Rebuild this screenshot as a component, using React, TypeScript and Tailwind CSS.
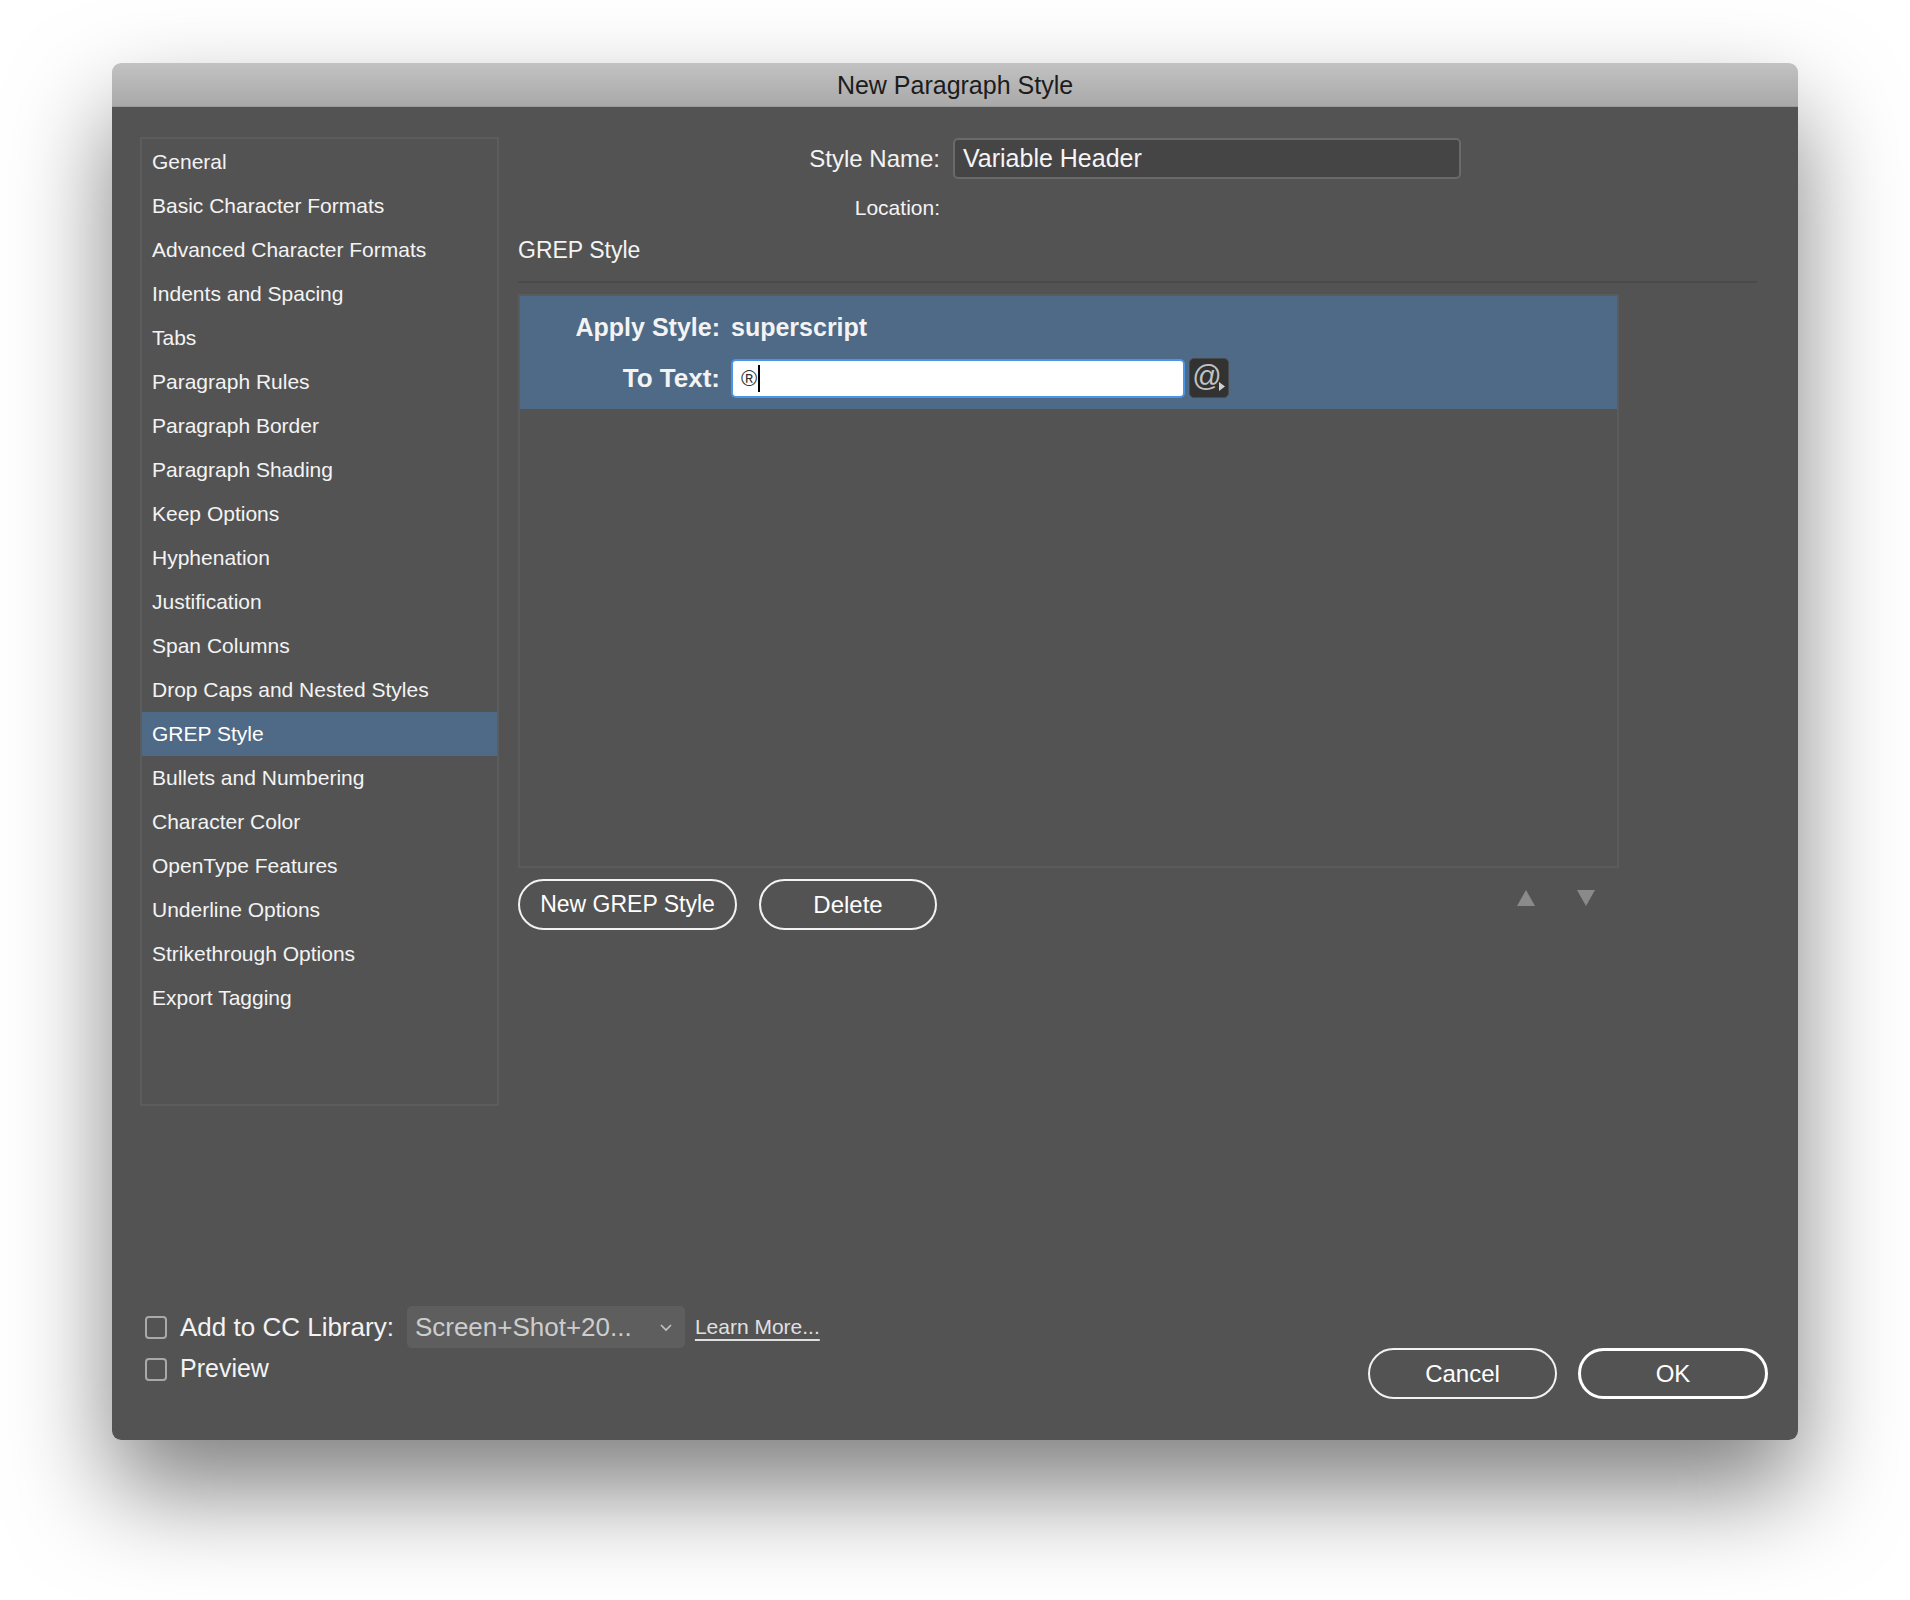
import React from "react";

// ---------------------------------------------------------------------------
// Data
// ---------------------------------------------------------------------------

const SECTIONS = [
  "General",
  "Basic Character Formats",
  "Advanced Character Formats",
  "Indents and Spacing",
  "Tabs",
  "Paragraph Rules",
  "Paragraph Border",
  "Paragraph Shading",
  "Keep Options",
  "Hyphenation",
  "Justification",
  "Span Columns",
  "Drop Caps and Nested Styles",
  "GREP Style",
  "Bullets and Numbering",
  "Character Color",
  "OpenType Features",
  "Underline Options",
  "Strikethrough Options",
  "Export Tagging",
];

const FONT = "font-['Liberation_Sans',Arial,sans-serif]";

// ---------------------------------------------------------------------------
// Component
// ---------------------------------------------------------------------------

export default function App() {
  return (
    <div className={`min-h-[1600px] w-[1910px] bg-white pt-[63px] ${FONT}`}>
      <div className="ml-[112px] flex w-[1686px] flex-col overflow-hidden rounded-[9px] shadow-[0_50px_100px_rgba(0,0,0,0.5)]">
        {/* Title bar */}
        <div className="flex h-[44px] items-center justify-center border-b border-[#9a9a9a] bg-gradient-to-b from-[#c2c2c2] to-[#a9a9a9] pt-[3px] text-[25px] text-[#1c1c1c]">
          New Paragraph Style
        </div>

        {/* Body */}
        <div className="flex h-[1333px] flex-col bg-[#535353] pl-[28px] pr-[30px] pt-[30px] text-[#f3f3f3]">
          <div className="flex">
            <Sidebar />
            <GrepPanel />
          </div>

          {/* Footer */}
          <div className="mt-[200px] flex items-start justify-between">
            <div className="flex flex-col pl-[5px]">
              <div className="flex h-[42px] items-center">
                <Checkbox />
                <span className="ml-[13px] text-[26px]">Add to CC Library:</span>
                <div className="ml-[13px] flex h-[42px] w-[278px] items-center justify-between rounded-[5px] bg-[#5e5e5e] pl-[8px] pr-[12px] text-[26px] text-[#cdcdcd]">
                  <span>Screen+Shot+20...</span>
                  <svg width="14" height="9" viewBox="0 0 14 9" aria-hidden="true">
                    <path d="M2 2 L7 7 L12 2" fill="none" stroke="#c4c4c4" strokeWidth={1.6} />
                  </svg>
                </div>
                <span className="ml-[10px] text-[21px] text-[#e0e0e0] underline decoration-[2px] underline-offset-[5px]">
                  Learn More...
                </span>
              </div>
              <div className="flex h-[42px] items-center">
                <Checkbox />
                <span className="ml-[13px] text-[25px]">Preview</span>
              </div>
            </div>

            <div className="mt-[42px] flex gap-[21px]">
              <button className="flex h-[51px] w-[189px] items-center justify-center rounded-full border-2 border-[#f2f2f2] text-[24px] text-white">
                Cancel
              </button>
              <button className="flex h-[51px] w-[190px] items-center justify-center rounded-full border-[3px] border-white text-[24px] text-white">
                OK
              </button>
            </div>
          </div>
        </div>
      </div>
    </div>
  );
}

// ---------------------------------------------------------------------------
// Sub-components
// ---------------------------------------------------------------------------

function Sidebar() {
  return (
    <div className="h-[969px] w-[359px] shrink-0 border-2 border-[#5c5c5c] pt-px">
      {SECTIONS.map((s) => (
        <div
          key={s}
          className={[
            "flex h-[44px] items-center pl-[10px] text-[21px]",
            s === "GREP Style" ? "bg-[#4f6a86] text-white" : "text-[#f3f3f3]",
          ].join(" ")}
        >
          {s}
        </div>
      ))}
    </div>
  );
}

function GrepPanel() {
  return (
    <div className="ml-[19px] flex flex-1 flex-col pr-[11px]">
      {/* Style name */}
      <div className="mt-px flex h-[41px] items-center">
        <span className="w-[422px] text-right text-[24px]">Style Name:</span>
        <div className="ml-[13px] flex h-[41px] w-[508px] items-center rounded-[5px] border-2 border-[#6a6a6a] bg-[#454545] pl-[8px] text-[25px] text-[#f5f5f5]">
          Variable Header
        </div>
      </div>
      <div className="mt-[16px] flex h-[26px] items-center">
        <span className="w-[422px] text-right text-[21px]">Location:</span>
      </div>

      <div className="mt-[14px] flex h-[30px] items-center text-[23px]">GREP Style</div>
      <div className="mt-[16px] h-[2px] bg-[#4a4a4a]" />

      {/* Rule list */}
      <div className="mt-[11px] h-[574px] w-[1101px] border-2 border-[#5b5b5b] bg-[#535353]">
        <div className="h-[113px] bg-[#4f6a86] pt-[17px]">
          <div className="flex h-[30px] items-center text-[25px] font-bold">
            <span className="w-[200px] text-right">Apply Style:</span>
            <span className="ml-[11px]">superscript</span>
          </div>
          <div className="mt-[15px] flex h-[40px] items-center">
            <span className="w-[200px] text-right text-[26px] font-bold">To Text:</span>
            <div className="ml-[11px] flex h-[39px] w-[454px] items-center rounded-[5px] border-2 border-[#4a95e6] bg-white pl-[8px] text-[22px] text-[#333]">
              <span>®</span>
              <span className="ml-px h-[27px] w-[2px] bg-black" />
            </div>
            <div className="relative ml-[4px] flex h-[40px] w-[40px] items-center justify-center rounded-[5px] border border-[#4a4a4a] bg-[#323232] text-[29px] leading-none text-[#c2c2c2]">
              <span className="-mt-[3px] -ml-[4px]">@</span>
              <svg className="absolute bottom-[6px] right-[3px]" width="6" height="9" viewBox="0 0 6 9" aria-hidden="true">
                <path d="M0 0 L6 4.5 L0 9 Z" fill="#d0d0d0" />
              </svg>
            </div>
          </div>
        </div>
      </div>

      {/* Buttons */}
      <div className="mt-[11px] flex w-[1101px] items-start">
        <button className="flex h-[51px] w-[219px] items-center justify-center rounded-full border-2 border-[#f2f2f2] text-[23px] text-white">
          New GREP Style
        </button>
        <button className="ml-[22px] flex h-[51px] w-[178px] items-center justify-center rounded-full border-2 border-[#f2f2f2] text-[24px] text-white">
          Delete
        </button>
        <div className="ml-auto mr-[24px] mt-[11px] flex gap-[42px]">
          <svg width="18" height="16" viewBox="0 0 18 16" aria-hidden="true">
            <path d="M9 0 L18 16 L0 16 Z" fill="#8a8a8a" />
          </svg>
          <svg width="18" height="16" viewBox="0 0 18 16" aria-hidden="true">
            <path d="M0 0 L18 0 L9 16 Z" fill="#8a8a8a" />
          </svg>
        </div>
      </div>
    </div>
  );
}

function Checkbox() {
  return <span className="block h-[23px] w-[22px] rounded-[4px] border-2 border-[#a9a9a9]" />;
}
